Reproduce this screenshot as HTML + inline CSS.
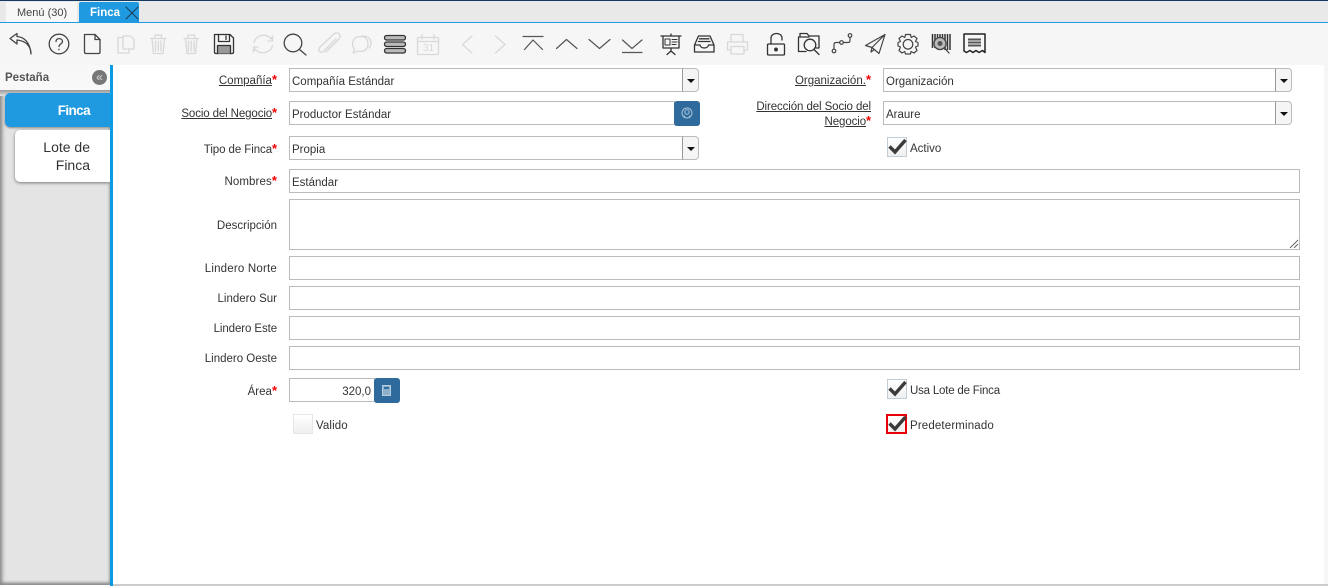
<!DOCTYPE html>
<html lang="es"><head><meta charset="utf-8"><title>Finca</title>
<style>
html,body{margin:0;padding:0;width:1328px;height:587px;overflow:hidden;background:#fff;font-family:"Liberation Sans",sans-serif;font-size:11.5px;color:#333}
div,span,u{position:absolute;box-sizing:border-box}
u,b i,.s i{position:static}
.lab{position:absolute;text-align:right;line-height:15px;white-space:nowrap}
.lab i{color:#e00;font-style:normal;font-size:13px;font-weight:bold;line-height:10px}
.lab u{text-decoration:underline}
.in{border:1px solid #bbb;background:#fff;height:24px;line-height:24px;padding-left:2px;padding-top:1px;white-space:nowrap;color:#333}
.cb{border:1px solid #bbb;border-left:1px solid #999;background:#f5f5f5;width:17px;height:24px;border-radius:0 4px 4px 0}
.cb:after{content:"";position:absolute;left:4px;top:10px;border-left:4px solid transparent;border-right:4px solid transparent;border-top:4px solid #111}
.btn{background:#2e6a9c;border-radius:3px;width:26px;height:25px}
.chk{width:20px;height:20px;border:1px solid #c4cdd4;background:linear-gradient(#fff,#efefef)}
.t{white-space:nowrap;line-height:14px}
</style></head><body>
<div style="left:0;top:0;width:1328px;height:1px;background:#123a63"></div>
<div style="left:0;top:1px;width:1328px;height:21px;background:#e9e9e9"></div>
<div style="left:6px;top:2px;width:71px;height:20px;background:#f7f7f7"></div>
<div class="t" style="left:17px;top:6px;color:#444;font-size:11px">Menú (30)</div>
<div style="left:79px;top:2px;width:60px;height:21px;background:#1f9ae0;border-radius:2px 2px 0 0"></div>
<div class="t" style="left:90px;top:6px;color:#fff;font-weight:bold;font-size:11.5px">Finca</div>
<div style="left:0;top:22px;width:1328px;height:1px;background:#1f9ae0"></div>
<div style="left:0;top:23px;width:1328px;height:42px;background:#f6f6f6"></div>

<svg style="position:absolute;left:0;top:0" width="1328" height="65" viewBox="0 0 1328 65" fill="none" stroke-linecap="round" stroke-linejoin="round">
<path d="M126 7L138 19M138 7L126 19" stroke="#1c3c5a" stroke-width="1"/>
<g stroke="#444" stroke-width="1.3">
<path d="M31 54C31 46 26 41 17 40V44L10 38.500L17 33.500V36.500C24 37 30 42 31 54Z" fill="#f6f6f6"/>
<circle cx="59" cy="44" r="9.800"/>
<path d="M56 41.500C56 37.500 62.500 37.800 62.500 41.500C62.500 44 59 44 59 46.500" />
<path d="M59 49.300V49.700"/>
<path d="M84.500 34.500H95L100 39.500V52C100 53 99.500 53.500 98.500 53.500H86C85 53.500 84.500 53 84.500 52Z"/>
<path d="M95 34.500V39.500H100"/>
<path d="M214.500 34.500H230L233.500 38V52C233.500 53 233 53.500 232 53.500H216C215 53.500 214.500 53 214.500 52Z" stroke="#333"/>
<path d="M218.500 34.500V41.500H229.500V34.500" stroke="#333"/><path d="M226 36V39.500" stroke="#333"/>
<path d="M217.500 53.500V45.500H230.500V53.500" fill="#999" stroke="#333"/>
<circle cx="293" cy="43" r="8.800"/><path d="M299.500 49.500L306 55"/>
<rect x="384.500" y="35.500" width="21" height="4.500" rx="2.200" fill="#bbb" stroke="#333"/>
<rect x="384.500" y="42" width="21" height="4.500" rx="2.200" fill="#bbb" stroke="#333"/>
<rect x="384.500" y="48.500" width="21" height="4.500" rx="2.200" fill="#bbb" stroke="#333"/>
</g>
<g stroke="#d8d8d8" stroke-width="1.300">
<path d="M123 37.500H118V53H129V49M123 37.500V36H130L134 39V49H123Z"/>
<path d="M150.500 38.500H166M155 38.500V35H161.500V38.500M152 38.500L153.500 53.500H163L164.500 38.500M155.500 41V51M158.300 41V51M161 41V51"/>
<path d="M184 38.500H198.500M188 38.500V35H194.500V38.500M185.500 38.500L187 53.500H195.500L197 38.500M188.500 41V51M191.200 41V51M194 41V51"/>
<path d="M254 42.500C256 35 266 32.500 271 39L272.500 36M272.500 45.500C270.500 53 260.500 55.500 255 49L253.500 52M272.500 36V41H268M253.500 52V47H258"/>
<path d="M336 39L324 51C319 55 317 49 321 46L334 34C338 31 342 35 339 39L326 52"/>
<path d="M362 36C367 36 371 38 371 43C371 46 370 47 369 48M361 36.500C356 36.500 352.500 39 352.500 44C352.500 46.500 353.500 48 354.500 49L353 53L358 51C364 52.500 368 49 368 44C368 39 365 36.500 361 36.500Z"/>
<rect x="417.500" y="37.500" width="21" height="17" rx="1"/><path d="M417.500 41.500H438.500M422 34.500V39M434 34.500V39"/>
<path d="M472 36L462.500 44.500L472 53M495.500 36L505 44.500L495.500 53" stroke-width="1.200"/>
<path d="M731 42V34.500H743V42M730 50H727.500V42H747.500V50H745M731 46.500H744V54H731Z"/>
</g>
<text x="423" y="51" font-family="Liberation Sans" font-size="10" fill="#d8d8d8">31</text>
<g stroke="#555" stroke-width="1.200">
<path d="M523 36.500H543M524.500 49.500L533 40L542.500 49.500"/>
<path d="M556.500 48.500L566.500 39.500L577 48.500"/>
<path d="M589 39.500L599.500 48.500L610 39.500"/>
<path d="M622.500 40L632 48.500L642 40M622.500 52.500H642"/>
</g>
<g stroke="#333" stroke-width="1.300">
<path d="M661 36H681M663 36V48H679V36M671 34V36M671 48V51M667 54.500L671 51L675 54.500"/>
<rect x="665" y="39" width="5" height="6" stroke-width="1"/><path d="M672 39.500H677M672 42H677M672 44.500H676" stroke-width="1"/>
<path d="M694.500 45L698.500 36H710L714 45V52H694.500ZM694.500 45H700C700.500 49 708 49 708.500 45H714M699.500 38.800H709M698.500 41.500H710"/>
<path d="M771 44V38C771 32 782 32 782 38V40"/>
<rect x="767.500" y="44" width="17" height="11" rx="1"/><circle cx="776" cy="49.500" r="1.300" fill="#333"/>
<path d="M800 37V33.500H807L809 36H819V48H816M799 37H809M798.500 37V51.500H806"/>
<circle cx="810" cy="45" r="5.800"/><path d="M814 49.500L819 54.500"/>
</g>
<g stroke="#444" stroke-width="1.200">
<circle cx="834" cy="51" r="1.800"/><path d="M834 49V44.500C834 43 835 42.500 836 42.500H839.500"/><circle cx="841.500" cy="42.500" r="1.800"/>
<path d="M843.500 42.500H848C849.500 42.500 850 42 850 40.500V37.500"/><circle cx="850" cy="35.500" r="1.800"/>
<path d="M885 34.500L865.500 45.500L872 47.500L879 53.500ZM885 34.500L872 47.500L871 52L874.500 49.500" />
<path d="M905.500 34.500H910.500L911.200 37.500L914 36L917 38.500L915.500 41.500L918 42.500V46L915.500 47L917 50.500L914 53L911 51.500L910.500 54H905.500L904.800 51.500L902 53L899 50.500L900.500 47L898 46V42.500L900.500 41.500L899 38.500L902 36L904.800 37.500Z"/>
<circle cx="908" cy="44.300" r="4.800"/>
</g>
<path d="M932.500 34V48M935 34V48M937.500 34V40M940 34V40M942.500 34V40M945 34V50M947.500 34V50M950 34V50" stroke="#333" stroke-width="1.500" stroke-linecap="butt"/>
<circle cx="940" cy="43.500" r="6" fill="#bbb" stroke="#444" stroke-width="1.300"/><circle cx="940" cy="43.500" r="2.500" fill="#555"/>
<path d="M944.500 48L949 53" stroke="#444" stroke-width="1.300"/>
<path d="M964 34H985V52.500L982.500 50.500L979 52.500L976 50.500L973 52.500L970 50.500L966.500 52.500L964 51Z" stroke="#222" stroke-width="1.500"/>
<path d="M968 39.500H981M968 42.500H981M968 45.500H981" stroke="#555" stroke-width="2" stroke-linecap="butt"/>
</svg>

<!-- side panel -->
<div style="left:0;top:65px;width:110px;height:520px;background:#e4e4e4;box-shadow:inset 2px 0 4px #888,inset 0 -2px 3px #888"></div>
<div style="left:0;top:65px;width:110px;height:25px;background:#f8f8f8"></div>
<div style="left:0;top:90px;width:110px;height:6px;background:linear-gradient(#999,#e4e4e4)"></div>
<div class="t" style="left:5px;top:71px;font-weight:bold;font-size:11.5px;color:#555">Pestaña</div>
<div style="left:92px;top:70px;width:15px;height:15px;border-radius:50%;background:#777;color:#ddd;font-size:12px;line-height:15px;text-align:center">«</div>
<div style="left:5px;top:93px;width:105px;height:34px;background:#1f9ae0;border-radius:5px 0 0 5px;box-shadow:0 1px 2px #888;color:#fff;font-weight:bold;font-size:13.5px;letter-spacing:-.6px;line-height:35px;text-align:right;padding-right:20px">Finca</div>
<div style="left:15px;top:130px;width:95px;height:52px;background:#fff;border-radius:5px 0 0 5px;box-shadow:0 1px 3px #777;color:#333;font-size:14px;line-height:18px;text-align:right;padding:8px 20px 0 0">Lote de<br>Finca</div>
<div style="left:110px;top:65px;width:3px;height:521px;background:#0a9be2"></div>
<div style="left:113px;top:584px;width:1215px;height:2px;background:#ccc"></div>
<div style="left:1324px;top:65px;width:4px;height:519px;background:#f6f6f6"></div>

<!-- labels -->
<span class="lab" style="right:1051px;top:74px"><u>Compañía</u><i>*</i></span>
<span class="lab" style="right:1051px;top:107px;letter-spacing:-.12px"><u>Socio del Negocio</u><i>*</i></span>
<span class="lab" style="right:1051px;top:143px;letter-spacing:-.08px">Tipo de Finca<i>*</i></span>
<span class="lab" style="right:1051px;top:175px;letter-spacing:.1px">Nombres<i>*</i></span>
<span class="lab" style="right:1051px;top:219px">Descripción</span>
<span class="lab" style="right:1051px;top:262px;letter-spacing:.2px">Lindero Norte</span>
<span class="lab" style="right:1051px;top:292px">Lindero Sur</span>
<span class="lab" style="right:1051px;top:322px;letter-spacing:-.1px">Lindero Este</span>
<span class="lab" style="right:1051px;top:352px">Lindero Oeste</span>
<span class="lab" style="right:1051px;top:385px">Área<i>*</i></span>
<span class="lab" style="right:457px;top:74px"><u>Organización.</u><i>*</i></span>
<span class="lab" style="right:457px;top:100px;letter-spacing:-.1px"><u>Dirección del Socio del</u><br><u>Negocio</u><i>*</i></span>

<!-- fields -->
<div class="in" style="left:289px;top:68px;width:394px">Compañía Estándar</div><div class="cb" style="left:682px;top:68px"></div>
<div class="in" style="left:289px;top:101px;width:386px">Productor Estándar</div>
<div class="btn" style="left:674px;top:101px"><svg style="position:absolute;left:7px;top:6px" width="12" height="12" fill="none" stroke="#a9c4da" stroke-width="1"><circle cx="6" cy="6" r="5"/><circle cx="6" cy="5" r="2.200"/><path d="M3.500 10V8.500M8.500 10V8.500"/></svg></div>
<div class="in" style="left:289px;top:136px;width:394px">Propia</div><div class="cb" style="left:682px;top:136px"></div>
<div class="in" style="left:883px;top:68px;width:393px">Organización</div><div class="cb" style="left:1275px;top:68px"></div>
<div class="in" style="left:883px;top:101px;width:393px">Araure</div><div class="cb" style="left:1275px;top:101px"></div>
<div class="in" style="left:289px;top:169px;width:1011px">Estándar</div>
<div class="in" style="left:289px;top:199px;width:1011px;height:51px"><svg style="position:absolute;right:0;bottom:0" width="10" height="10" stroke="#666" stroke-width="1"><path d="M1 9L9 1M5 9L9 5"/></svg></div>
<div class="in" style="left:289px;top:256px;width:1011px"></div>
<div class="in" style="left:289px;top:286px;width:1011px"></div>
<div class="in" style="left:289px;top:316px;width:1011px"></div>
<div class="in" style="left:289px;top:346px;width:1011px"></div>
<div class="in" style="left:289px;top:378px;width:86px;text-align:right;padding-right:3px">320,0</div>
<div class="btn" style="left:374px;top:378px"><svg style="position:absolute;left:8px;top:7px" width="10" height="11"><rect x="0.500" y="0.500" width="8" height="10" fill="#8fb0ca" stroke="#b5cbdc"/><rect x="2" y="2" width="5" height="2" fill="#2e6a9c"/></svg></div>

<!-- checks -->
<div class="chk" style="left:887px;top:137px"><svg style="position:absolute;left:-1px;top:-1px" width="20" height="20" fill="none" stroke="#3a3a3a" stroke-width="3.400"><path d="M2.500 9.500L8 15L18.500 3"/></svg></div>
<div class="t" style="left:910px;top:142px">Activo</div>
<div class="chk" style="left:887px;top:379px"><svg style="position:absolute;left:-1px;top:-1px" width="20" height="20" fill="none" stroke="#3a3a3a" stroke-width="3.400"><path d="M2.500 9.500L8 15L18.500 3"/></svg></div>
<div class="t" style="left:910px;top:384px;letter-spacing:-.2px">Usa Lote de Finca</div>
<div class="chk" style="left:293px;top:414px;border-color:#e6e6e6"></div>
<div class="t" style="left:316px;top:419px;letter-spacing:.1px">Valido</div>
<div class="chk" style="left:886px;top:414px;border:2px solid #e8000b;width:21px"><svg style="position:absolute;left:-1px;top:-2px" width="20" height="20" fill="none" stroke="#3a3a3a" stroke-width="3.400"><path d="M2.500 9.500L8 15L18.500 3"/></svg></div>
<div class="t" style="left:910px;top:419px;letter-spacing:.15px">Predeterminado</div>
</body></html>
